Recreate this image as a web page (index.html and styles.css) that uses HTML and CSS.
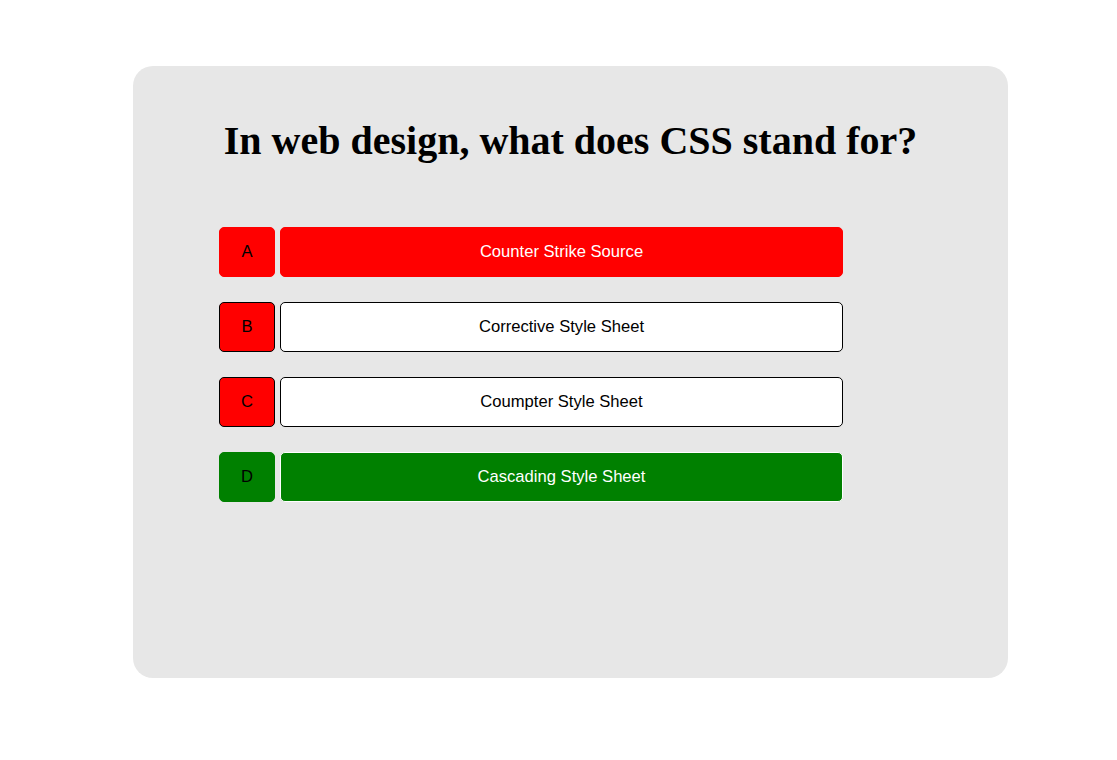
FILE: index.html
```html
<!DOCTYPE html>
<html>
<head>
<meta charset="utf-8">
<link rel="stylesheet" href="styles.css">
</head>
<body>
<div class="card">
  <h1 class="question">In web design, what does CSS stand for?</h1>
  <div class="answers">
    <div class="row">
      <div class="letter letter-red-plain">A</div>
      <div class="answer answer-wrong">Counter Strike Source</div>
    </div>
    <div class="row">
      <div class="letter letter-red">B</div>
      <div class="answer">Corrective Style Sheet</div>
    </div>
    <div class="row">
      <div class="letter letter-red">C</div>
      <div class="answer">Coumpter Style Sheet</div>
    </div>
    <div class="row">
      <div class="letter letter-green">D</div>
      <div class="answer answer-right">Cascading Style Sheet</div>
    </div>
  </div>
</div>
</body>
</html>
```

FILE: styles.css
```css
html, body {
  margin: 0;
  padding: 0;
  background: #ffffff;
}
body {
  padding: 66px 0 0 133px;
}
.card {
  box-sizing: border-box;
  width: 875px;
  height: 612px;
  background: #e7e7e7;
  border-radius: 20px;
  padding-top: 50px;
}
.question {
  margin: 0;
  text-align: center;
  font-family: "Liberation Serif", "Times New Roman", serif;
  font-weight: bold;
  font-size: 40px;
  line-height: 50px;
  color: #000;
}
.answers {
  margin: 61px 0 0 86px;
  display: flex;
  flex-direction: column;
  gap: 25px;
}
.row {
  display: flex;
  gap: 5px;
}
.letter, .answer {
  box-sizing: border-box;
  height: 50px;
  display: flex;
  align-items: center;
  justify-content: center;
  font-family: "Liberation Sans", Arial, sans-serif;
  font-size: 16.6px;
  border-radius: 5px;
  color: #000;
}
.letter {
  width: 56px;
}
.letter-red-plain {
  background: #ff0000;
  border: 1px solid #ff0000;
}
.letter-red {
  background: #ff0000;
  border: 1px solid #000;
}
.letter-green {
  background: #008000;
  border: 1px solid #008000;
}
.answer {
  width: 563px;
  background: #fff;
  border: 1px solid #000;
}
.answer-wrong {
  background: #ff0000;
  border-color: #ff0000;
  color: #fff;
}
.answer-right {
  background: #008000;
  border: 1px solid #fff;
  color: #fff;
}
```
